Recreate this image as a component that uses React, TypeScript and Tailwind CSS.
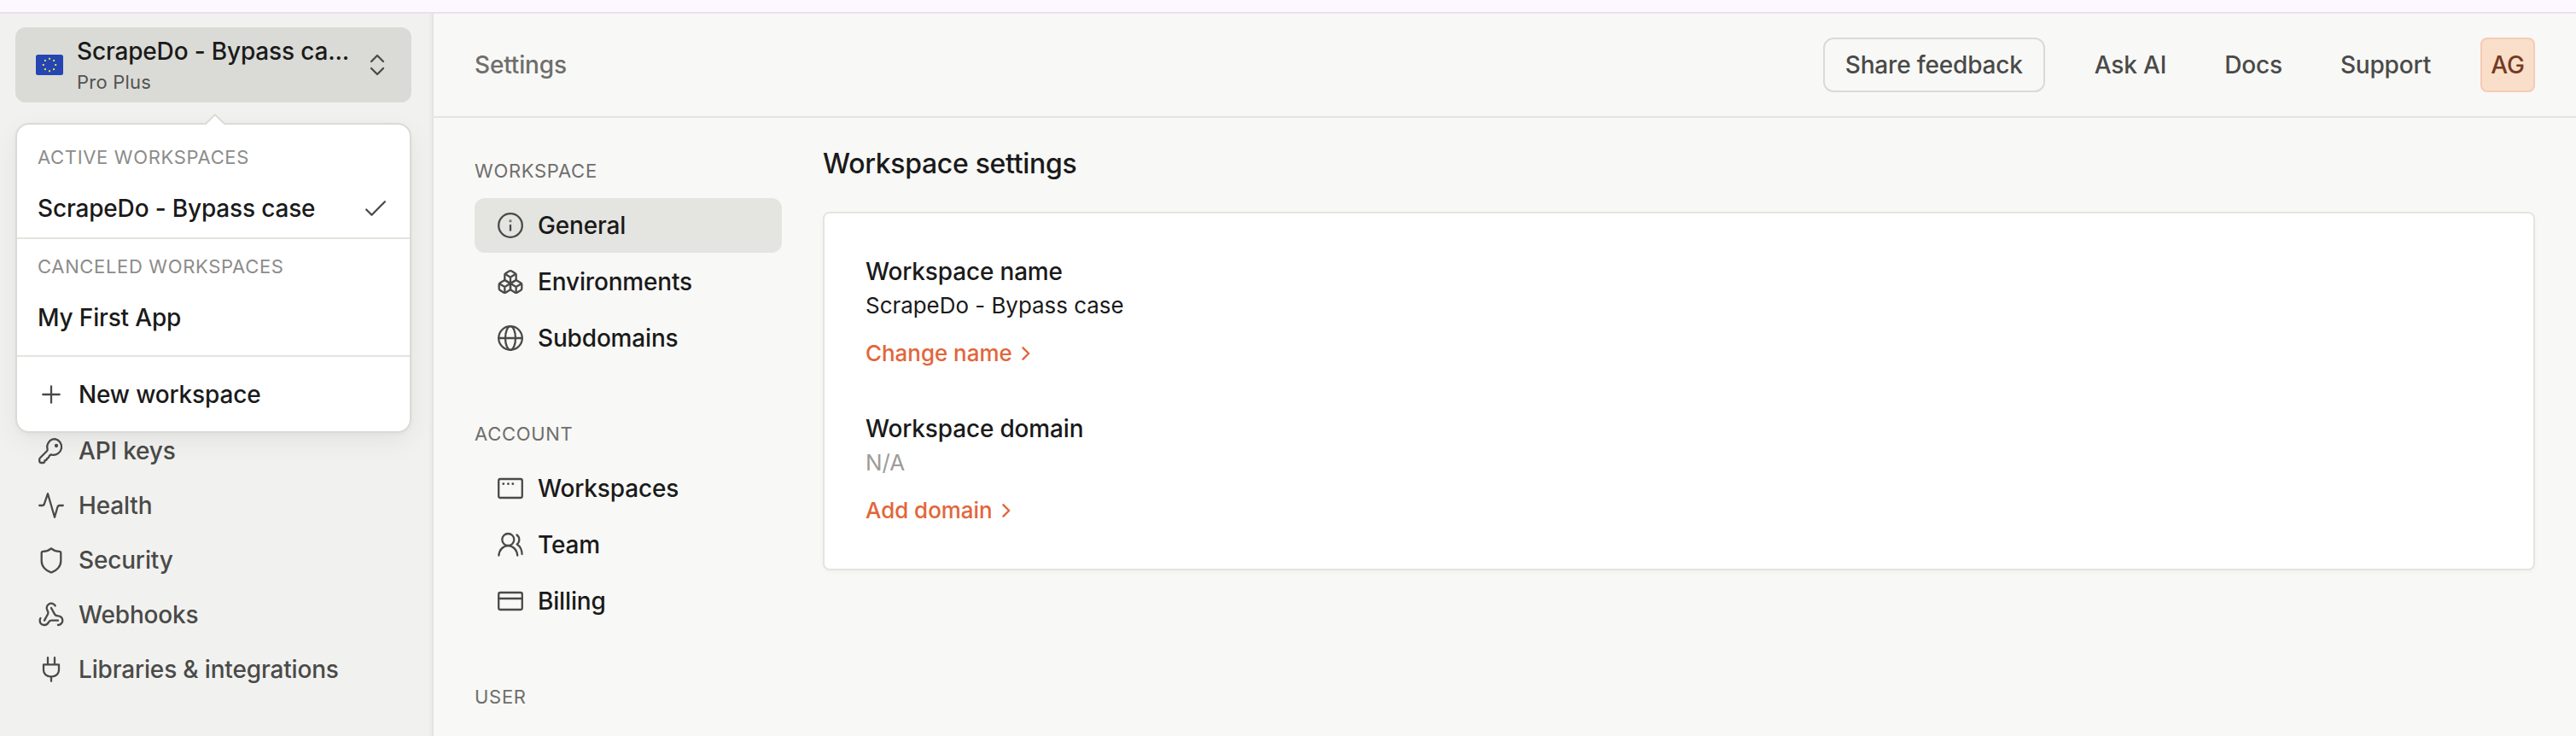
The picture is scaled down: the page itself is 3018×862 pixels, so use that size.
import React from "react";

type IconProps = { children: React.ReactNode; className?: string };

function Icon({ children, className = "" }: IconProps) {
  return (
    <svg
      viewBox="0 0 32 32"
      fill="none"
      stroke="currentColor"
      strokeWidth="2.300"
      strokeLinecap="round"
      strokeLinejoin="round"
      className={`size-8 shrink-0 text-[#4a4a48] ${className}`}
    >
      {children}
    </svg>
  );
}

const keyIcon = (
  <Icon>
    <path d="M20.500 2.200a9.300 9.300 0 0 0-8.900 11.800 2.400 2.400 0 0 1-.6 2.300l-8 8a2.600 2.600 0 0 0-.8 1.900v1.800a2 2 0 0 0 2 2h2.200a2 2 0 0 0 2-2v-.6c1.700-.2 2.500-.9 2.800-2.600 1.500-.3 2.100-1 2.400-2.600l.7-.8a2.800 2.800 0 0 1 2.700-.8A9.300 9.300 0 1 0 20.500 2.200Z" />
    <circle cx="22" cy="10" r="1" fill="currentColor" />
  </Icon>
);

const pulseIcon = (
  <Icon>
    <path d="M2.200 16h3.300a2.500 2.500 0 0 0 2.400-1.900L12 2.200l8 27.600 3.300-11.600a3 3 0 0 1 2.800-2.200h3.700" />
  </Icon>
);

const shieldIcon = (
  <Icon>
    <path d="M16 2.300c2.800 2.500 6.300 3.300 9.400 3.500a2 2 0 0 1 1.900 2V17c0 7-5.500 11.500-10.300 13.200a3 3 0 0 1-2 0C10.200 28.500 4.700 24 4.700 17V7.800a2 2 0 0 1 1.900-2c3.100-.2 6.600-1 9.400-3.500Z" />
  </Icon>
);

const webhookIcon = (
  <Icon>
    <g transform="scale(1.333)" strokeWidth="1.750">
      <path d="M18 16.980h-5.990c-1.100 0-1.950.94-2.480 1.900A4 4 0 0 1 2 17c.01-.7.200-1.400.57-2" />
      <path d="m6 17 3.130-5.780c.53-.97.100-2.180-.5-3.100a4 4 0 1 1 6.890-4.060" />
      <path d="m12 6 3.130 5.730C15.660 12.700 16.900 13 18 13a4 4 0 0 1 0 8" />
    </g>
  </Icon>
);

const plugIcon = (
  <Icon>
    <path d="M12 2.200v8M20 2.200v8M16 24.500v5.300M7 10.300h18v6.700a7.500 7.500 0 0 1-7.500 7.300h-3a7.500 7.500 0 0 1-7.500-7.300Z" />
  </Icon>
);

const infoIcon = (
  <Icon>
    <circle cx="16" cy="16" r="13.800" />
    <path d="M16 16v5.700" />
    <circle cx="16" cy="10.700" r=".4" fill="currentColor" />
  </Icon>
);

const boxesIcon = (
  <Icon>
    <g transform="scale(1.333)" strokeWidth="1.750">
      <path d="M2.970 12.920A2 2 0 0 0 2 14.630v3.240a2 2 0 0 0 .97 1.710l3 1.800a2 2 0 0 0 2.060 0L12 19v-5.500l-5-3-4.030 2.420Z" />
      <path d="m7 16.500-4.740-2.850M7 16.500l5-3M7 16.500v5.170" />
      <path d="M12 13.500V19l3.970 2.380a2 2 0 0 0 2.060 0l3-1.800a2 2 0 0 0 .97-1.710v-3.240a2 2 0 0 0-.97-1.710L17 10.500l-5 3Z" />
      <path d="m17 16.500-5-3M17 16.500l4.740-2.850M17 16.500v5.170" />
      <path d="M7.970 4.420A2 2 0 0 0 7 6.130v4.370l5 3 5-3V6.130a2 2 0 0 0-.97-1.710l-3-1.800a2 2 0 0 0-2.060 0l-3 1.800Z" />
      <path d="M12 8 7.260 5.150M12 8l4.740-2.850M12 13.500V8" />
    </g>
  </Icon>
);

const globeIcon = (
  <Icon>
    <circle cx="16" cy="16" r="13.800" />
    <ellipse cx="16" cy="16" rx="6" ry="13.800" />
    <path d="M2.200 16h27.600" />
  </Icon>
);

const windowIcon = (
  <Icon>
    <rect x="2.200" y="5" width="27.600" height="22" rx="2" />
    <g fill="currentColor" stroke="none">
      <circle cx="7.800" cy="10.700" r="1.400" />
      <circle cx="13.400" cy="10.700" r="1.400" />
      <circle cx="18.800" cy="10.700" r="1.400" />
    </g>
  </Icon>
);

const teamIcon = (
  <Icon>
    <circle cx="13.300" cy="10" r="7" />
    <path d="M2.400 28.500C2.900 22 7.500 17.200 13.300 17.200S23.700 22 24.200 28.500" />
    <path d="M23.500 4.500a7 7 0 0 1 2.800 5.500 7 7 0 0 1-2.600 5.500c3.600 2.200 5.700 6.500 5.900 11.500" />
  </Icon>
);

const cardIcon = (
  <Icon>
    <rect x="2.200" y="6" width="27.600" height="20" rx="2" />
    <path d="M2.200 13h27.600" />
  </Icon>
);

const sidebarItems = [
  { icon: keyIcon, label: "API keys" },
  { icon: pulseIcon, label: "Health" },
  { icon: shieldIcon, label: "Security" },
  { icon: webhookIcon, label: "Webhooks" },
  { icon: plugIcon, label: "Libraries & integrations" },
];

const sections = [
  {
    title: "WORKSPACE",
    items: [
      { icon: infoIcon, label: "General", active: true },
      { icon: boxesIcon, label: "Environments" },
      { icon: globeIcon, label: "Subdomains" },
    ],
  },
  {
    title: "ACCOUNT",
    items: [
      { icon: windowIcon, label: "Workspaces" },
      { icon: teamIcon, label: "Team" },
      { icon: cardIcon, label: "Billing" },
    ],
  },
  { title: "USER", items: [] },
];

const stars = Array.from({ length: 8 }, (_, i) => {
  const a = (i * Math.PI) / 4;
  return { x: 16 + 7.2 * Math.sin(a), y: 12 - 7.2 * Math.cos(a) };
});

function Flag() {
  return (
    <svg viewBox="0 0 32 24" className="h-6 w-8 shrink-0">
      <rect width="32" height="24" rx="2.500" fill="#2545b2" />
      {stars.map((s, i) => (
        <rect key={i} x={s.x - 1} y={s.y - 1} width="2" height="2" fill="#e8e04a" />
      ))}
    </svg>
  );
}

function WorkspaceSwitcher() {
  return (
    <div className="flex h-[88px] w-[464px] items-center rounded-xl bg-[#dadbd6] px-6">
      <Flag />
      <div className="ml-4 min-w-0 flex-1 pt-1">
        <div className="text-[28px] leading-[36px] font-medium tracking-[-0.006em] whitespace-nowrap text-[#1a1a1a]">
          ScrapeDo - Bypass ca...
        </div>
        <div className="text-[22px] leading-[36px] tracking-[0.01em] text-[#545452]">Pro Plus</div>
      </div>
      <Icon>
        <path d="m9 12 7-7 7 7M9 20l7 7 7-7" />
      </Icon>
    </div>
  );
}

function WorkspaceMenu() {
  return (
    <div className="absolute top-[128px] left-[18px] z-10 flex h-[363px] w-[464px] flex-col rounded-2xl border-2 border-[#dadad7] bg-white shadow-[0_10px_32px_rgba(0,0,0,0.06),0_2px_6px_rgba(0,0,0,0.03)]">
      <svg viewBox="0 0 26 14" className="absolute -top-[13px] left-[219px] h-[14px] w-[26px]">
        <path d="M0 14V13L13 1l13 12v1Z" fill="#fff" />
        <path d="M1 13 13 1.400 25 13" fill="none" stroke="#dadad7" strokeWidth="2" />
      </svg>
      <div className="flex h-[134px] flex-col border-b-2 border-[#e4e4df] px-6 pt-[22px]">
        <div className="text-[22px] leading-[32px] tracking-[0.03em] text-[#8c8c8a]">ACTIVE WORKSPACES</div>
        <div className="mt-4 flex h-[56px] items-center justify-between text-[28px] font-medium tracking-[-0.006em] text-[#1a1a1a]">
          ScrapeDo - Bypass case
          <Icon>
            <path d="m5.200 17.500 6.300 6.300L26.900 8.200" />
          </Icon>
        </div>
      </div>
      <div className="flex h-[138px] flex-col border-b-2 border-[#e4e4df] px-6 pt-4">
        <div className="text-[22px] leading-[32px] tracking-[0.03em] text-[#8c8c8a]">CANCELED WORKSPACES</div>
        <div className="mt-4 flex h-[56px] items-center text-[28px] font-medium tracking-[-0.006em] text-[#1a1a1a]">
          My First App
        </div>
      </div>
      <div className="flex flex-1 items-center gap-4 px-6 text-[28px] font-medium tracking-[-0.006em] text-[#1a1a1a]">
        <Icon>
          <path d="M16 6.300v19.400M6.300 16h19.400" />
        </Icon>
        New workspace
      </div>
    </div>
  );
}

function Sidebar() {
  return (
    <aside className="relative flex w-[508px] shrink-0 flex-col border-r-2 border-[#e4e4e2] bg-[#f1f1ef] pt-4 shadow-[inset_-4px_0_4px_-2px_rgba(0,0,0,0.03)]">
      <div className="px-[18px]">
        <WorkspaceSwitcher />
      </div>
      <WorkspaceMenu />
      <nav className="mt-[376px] px-[44px]">
        {sidebarItems.map((item) => (
          <a
            key={item.label}
            className="flex h-16 items-center gap-4 text-[28px] font-medium tracking-[-0.006em] text-[#4a4a48]"
          >
            {item.icon}
            {item.label}
          </a>
        ))}
      </nav>
    </aside>
  );
}

function Header() {
  return (
    <header className="flex h-[122px] shrink-0 items-center border-b-2 border-[#e4e4e2] px-12 text-[28px] font-medium tracking-[-0.006em] text-[#4a4a48]">
      <span className="flex-1 text-[#6e6e6c]">Settings</span>
      <button className="h-16 w-[260px] rounded-xl border-2 border-[#dadad8]">Share feedback</button>
      <a className="ml-[58px]">Ask AI</a>
      <a className="ml-[68px]">Docs</a>
      <a className="ml-[68px]">Support</a>
      <div className="ml-[58px] flex size-16 items-center justify-center rounded-lg border-2 border-[#f7c9b5] bg-[#f9dfca] text-[#753a22]">
        AG
      </div>
    </header>
  );
}

function SettingsNav() {
  return (
    <nav className="flex w-[360px] shrink-0 flex-col gap-16 pt-[46px]">
      {sections.map((section) => (
        <div key={section.title}>
          <div className="text-[22px] leading-8 tracking-[0.032em] text-[#6e6e6c]">{section.title}</div>
          <div className="mt-4 flex flex-col gap-0.5">
            {section.items.map((item) => (
              <a
                key={item.label}
                className={`flex h-16 items-center gap-4 rounded-xl px-[26px] text-[28px] font-medium tracking-[-0.006em] text-[#1a1a1a] ${
                  "active" in item && item.active ? "bg-[#e4e4e0]" : ""
                }`}
              >
                {item.icon}
                {item.label}
              </a>
            ))}
          </div>
        </div>
      ))}
    </nav>
  );
}

type FieldProps = { label: string; value: string; action: string; muted?: boolean };

function Field({ label, value, action, muted }: FieldProps) {
  return (
    <div className="tracking-[-0.003em]">
      <div className="text-[28px] leading-10 font-medium tracking-[-0.006em] text-[#1a1a1a]">{label}</div>
      <div className={muted ? "text-[26px] leading-10 text-[#9c9c9a]" : "text-[26px] leading-10 text-[#1a1a1a]"}>
        {value}
      </div>
      <a className="mt-4 flex items-center text-[26px] leading-10 font-medium text-[#e2663a]">
        {action}
        <svg
          viewBox="0 0 24 24"
          fill="none"
          stroke="currentColor"
          strokeWidth="2.400"
          strokeLinecap="round"
          strokeLinejoin="round"
          className="ml-1 size-6"
        >
          <path d="m8.500 5.300 6.700 6.700-6.700 6.700" />
        </svg>
      </a>
    </div>
  );
}

export default function App() {
  return (
    <div className="flex h-[862px] w-[3018px] flex-col overflow-hidden bg-[#f8f8f6] font-['Inter',sans-serif] antialiased">
      <div className="h-4 shrink-0 border-b-2 border-[#e9e0ee] bg-[#fdf7ff]" />
      <div className="flex min-h-0 flex-1">
        <Sidebar />
        <div className="flex min-w-0 flex-1 flex-col">
          <Header />
          <main className="flex min-h-0 flex-1 gap-12 overflow-hidden px-12">
            <SettingsNav />
            <section className="flex-1 pt-[30px]">
              <h1 className="text-[32px] leading-[48px] font-medium tracking-[-0.01em] text-[#1a1a1a]">
                Workspace settings
              </h1>
              <div className="mt-8 flex h-[420px] flex-col gap-12 rounded-lg border-2 border-[#e4e4e2] bg-white px-12 pt-[48px] shadow-[0_2px_4px_rgba(0,0,0,0.03)]">
                <Field label="Workspace name" value="ScrapeDo - Bypass case" action="Change name" />
                <Field label="Workspace domain" value="N/A" action="Add domain" muted />
              </div>
            </section>
          </main>
        </div>
      </div>
    </div>
  );
}
